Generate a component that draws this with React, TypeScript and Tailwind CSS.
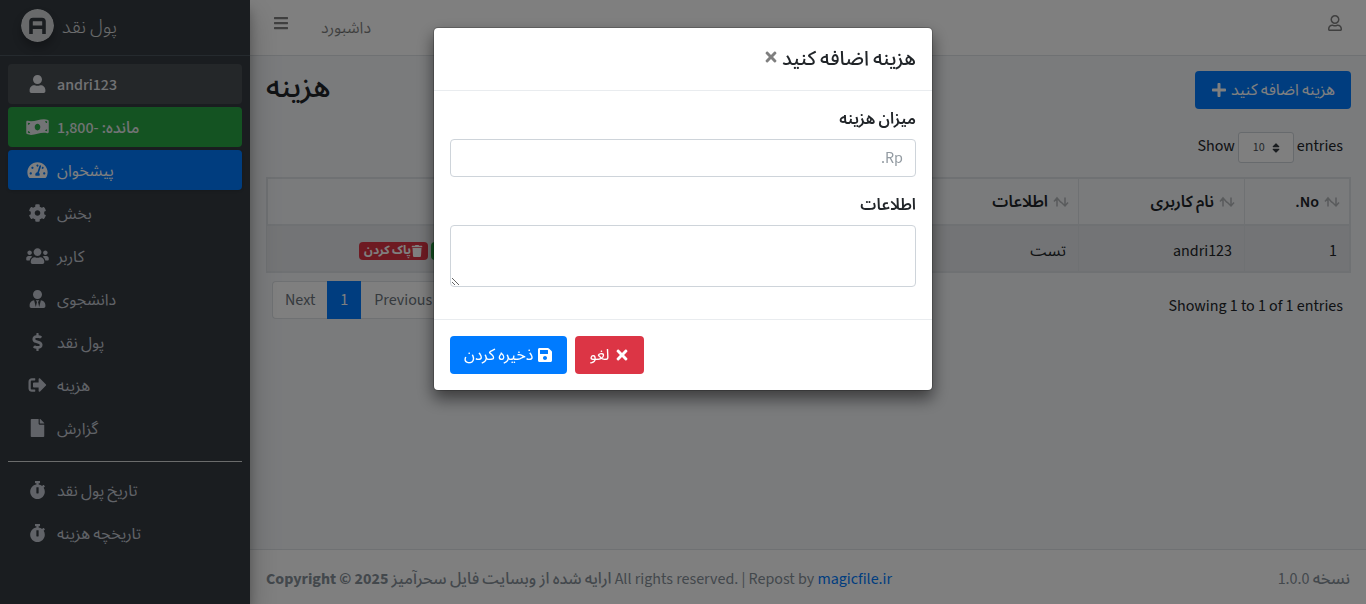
import type { ReactNode } from 'react';
import {
  FaBars,
  FaCog,
  FaDollarSign,
  FaEdit,
  FaFile,
  FaMoneyBillWave,
  FaPlus,
  FaRegUser,
  FaSave,
  FaSignOutAlt,
  FaSort,
  FaStopwatch,
  FaTachometerAlt,
  FaTimes,
  FaTrash,
  FaUser,
  FaUsers,
  FaUserTie,
} from 'react-icons/fa';
import type { IconType } from 'react-icons';

type Tone = 'plain' | 'user' | 'balance' | 'active';

const tones: Record<Tone, string> = {
  plain: 'text-[#c2c7d0]',
  user: 'bg-white/10 font-medium text-[#e4e6ea]',
  balance: 'bg-[#28a745] font-medium text-[#e4e6ea]',
  active: 'bg-[#007bff] text-white shadow',
};

function NavItem({ icon: Icon, tone = 'plain', children }: { icon: IconType; tone?: Tone; children: ReactNode }) {
  return (
    <li>
      <a href="#" className={`flex h-10 items-center gap-2 rounded px-[18px] pt-[2px] ${tones[tone]}`}>
        <Icon className="mb-[3px] h-[18px] w-[23px]" />
        <span dir="rtl">{children}</span>
      </a>
    </li>
  );
}

function Sidebar() {
  return (
    <aside className="z-10 flex w-[250px] shrink-0 flex-col bg-[#343a40] shadow-[0_14px_28px_rgba(0,0,0,0.25),0_10px_10px_rgba(0,0,0,0.22)]">
      <a href="#" className="flex h-14 items-center gap-2 border-b border-[#4b545c] px-[21px] text-[19px] text-white/80">
        <svg viewBox="0 0 33 33" className="mb-1 size-[33px] rounded-full shadow-[0_6px_8px_rgba(0,0,0,0.25)]">
          <circle cx="16.5" cy="16.5" r="16.5" fill="#d3d5d7" />
          <path d="M10 25V12.500Q10 10.500 12 10.500H21Q23 10.500 23 12.500V25M10 18.200H23" fill="none" stroke="#343a40" strokeWidth="3.600" />
        </svg>
        <span dir="rtl" className="font-light">پول نقد</span>
      </a>
      <nav className="p-2">
        <ul className="flex flex-col gap-[3px]">
          <NavItem icon={FaUser} tone="user">andri123</NavItem>
          <NavItem icon={FaMoneyBillWave} tone="balance">مانده: -1,800</NavItem>
          <NavItem icon={FaTachometerAlt} tone="active">پیشخوان</NavItem>
          <NavItem icon={FaCog}>بخش</NavItem>
          <NavItem icon={FaUsers}>کاربر</NavItem>
          <NavItem icon={FaUserTie}>دانشجوی</NavItem>
          <NavItem icon={FaDollarSign}>پول نقد</NavItem>
          <NavItem icon={FaSignOutAlt}>هزینه</NavItem>
          <NavItem icon={FaFile}>گزارش</NavItem>
        </ul>
        <hr className="mt-[13px] mb-2 border-white/80" />
        <ul className="flex flex-col gap-[3px]">
          <NavItem icon={FaStopwatch}>تاریخ پول نقد</NavItem>
          <NavItem icon={FaStopwatch}>تاریخچه هزینه</NavItem>
        </ul>
      </nav>
    </aside>
  );
}

function HeaderCell({ className, children }: { className: string; children?: ReactNode }) {
  return (
    <th className={`h-12 border-t border-r border-b-2 border-[#dee2e6] px-2 text-right font-semibold ${className}`}>
      <span className="flex items-center gap-1">
        <svg aria-hidden="true" viewBox="0 0 18 12" className="h-3 w-[18px] fill-none stroke-current stroke-[1.5] opacity-30">
          <path d="M5 10.500V2M2 5.500L5 2L9 6.500M9 6L13 10L16 6.500M13 10V1.500" />
        </svg>
        <span>{children}</span>
      </span>
    </th>
  );
}

const cell = 'h-[46px] border-r border-b border-[#dee2e6] bg-black/5 px-3 pt-1 text-right';

function Expenses() {
  return (
    <main className="grow pt-4 pr-[15px] pl-4">
      <div dir="rtl" className="flex justify-between">
        <button type="button" className="-mt-px flex h-[38px] items-center gap-1 rounded bg-[#007bff] px-4 text-white">
          هزینه اضافه کنید
          <FaPlus className="size-4" />
        </button>
        <h1 className="text-[30px] leading-8 font-medium">هزینه</h1>
      </div>
      <div className="mt-[23px] flex justify-end pr-2">
        <label className="flex items-center gap-[3px]">
          <span className="pb-[3px]">Show</span>
          <span className="grid items-center">
            <select className="col-start-1 row-start-1 h-[31px] w-14 appearance-none rounded-[3px] border border-[#ced4da] bg-white pl-[14px] text-xs text-[#495057]">
              <option>10</option>
            </select>
            <FaSort className="pointer-events-none col-start-1 row-start-1 mr-3 size-3 justify-self-end text-[#343a40]" />
          </span>
          <span className="pb-[3px]">entries</span>
        </label>
      </div>
      <table dir="rtl" className="mt-[14px] w-full table-fixed border-separate border-spacing-0 border border-[#dee2e6]">
        <thead>
          <tr>
            <HeaderCell className="w-[105px]">No.</HeaderCell>
            <HeaderCell className="w-[166px]">نام کاربری</HeaderCell>
            <HeaderCell className="w-[166px]">اطلاعات</HeaderCell>
            <th className="border-t border-b-2 border-l border-[#dee2e6]" />
          </tr>
        </thead>
        <tbody>
          <tr>
            <td className={cell}>1</td>
            <td className={cell}>andri123</td>
            <td className={cell}>تست</td>
            <td className="border-b border-[#dee2e6] bg-black/5 pt-1 pl-[92px]">
              <div className="flex justify-end gap-[3px] text-xs font-bold text-white">
                <button type="button" aria-label="Edit" className="flex h-[18px] w-[60px] items-center justify-center rounded bg-[#28a745]">
                  <FaEdit />
                </button>
                <button type="button" className="flex h-[18px] items-center rounded bg-[#dc3545] px-[5px]">
                  <FaTrash className="size-3" />
                  پاک کردن
                </button>
              </div>
            </td>
          </tr>
        </tbody>
      </table>
      <div className="mt-2 flex items-start justify-between pr-2 pl-[6px]">
        <nav className="flex h-[38px] text-[#6c757d]">
          <a href="#" className="flex items-center rounded-l border border-r-0 border-[#dee2e6] bg-white px-3">Next</a>
          <a href="#" className="flex items-center bg-[#007bff] px-[13px] text-white">1</a>
          <a href="#" className="flex items-center rounded-r border border-l-0 border-[#dee2e6] bg-white px-[13px]">Previous</a>
        </nav>
        <p className="pt-[13px]">Showing 1 to 1 of 1 entries</p>
      </div>
    </main>
  );
}

function ExpenseDialog() {
  return (
    <div className="fixed inset-0 z-20 flex items-start justify-center bg-black/50 pt-[27px]">
      <div
        role="dialog"
        aria-modal="true"
        aria-labelledby="dialog-title"
        dir="rtl"
        className="w-[500px] rounded-[5px] border border-black/20 bg-white bg-clip-padding shadow-[0_8px_16px_rgba(0,0,0,0.5)]"
      >
        <div className="flex items-start border-b border-[#e9ecef] p-4">
          <h2 id="dialog-title" className="text-xl leading-[30px] font-medium">هزینه اضافه کنید</h2>
          <button type="button" aria-label="Close" className="pt-[5px] pr-[3px] text-[#7f7f7f]">
            <FaTimes className="size-4" />
          </button>
        </div>
        <form id="expense" className="flex flex-col p-4 pb-8">
          <label htmlFor="amount" className="mb-2 font-semibold">میزان هزینه</label>
          <input id="amount" placeholder="Rp." className="mb-4 h-[38px] rounded border border-[#ced4da] px-3 placeholder:text-[#939ba2]" />
          <label htmlFor="info" className="mb-2 font-semibold">اطلاعات</label>
          <textarea id="info" className="h-[62px] resize rounded border border-[#ced4da] px-3 py-[6px]" />
        </form>
        <div className="flex justify-end gap-2 border-t border-[#e9ecef] p-4 text-white">
          <button type="button" className="flex h-[38px] items-center gap-1 rounded bg-[#dc3545] px-[14px]">
            <FaTimes className="size-4" />
            لغو
          </button>
          <button type="submit" form="expense" className="flex h-[38px] items-center gap-1 rounded bg-[#007bff] px-[14px]">
            <FaSave className="size-4" />
            ذخیره کردن
          </button>
        </div>
      </div>
    </div>
  );
}

export default function App() {
  return (
    <div className="flex min-h-screen bg-[#f4f6f9] font-['Source_Sans_Pro','Source_Sans_3','Noto_Sans_Arabic','Noto_Sans',sans-serif] text-base leading-6 text-[#212529]">
      <Sidebar />
      <div className="flex min-w-0 grow flex-col">
        <header className="flex h-14 items-center border-b border-[#dee2e6] bg-white px-[23px] text-black/50">
          <button type="button" aria-label="Menu" className="mb-[10px]">
            <FaBars className="size-4" />
          </button>
          <a href="#" className="ml-8">داشبورد</a>
          <button type="button" aria-label="Account" className="mb-[10px] ml-auto">
            <FaRegUser className="size-4" />
          </button>
        </header>
        <Expenses />
        <footer className="flex h-[55px] items-center justify-between border-t border-[#dee2e6] bg-white px-4 pt-1 text-[#869099]">
          <p>
            <strong>
              Copyright © 2025 <span className="font-medium">ارایه شده از وبسایت فایل سحرآمیز</span>
            </strong>{' '}
            All rights reserved. | Repost by{' '}
            <a href="#" className="text-[#007bff]">magicfile.ir</a>
          </p>
          <p dir="rtl"><b className="font-medium">نسخه</b> 1.0.0</p>
        </footer>
      </div>
      <ExpenseDialog />
    </div>
  );
}
